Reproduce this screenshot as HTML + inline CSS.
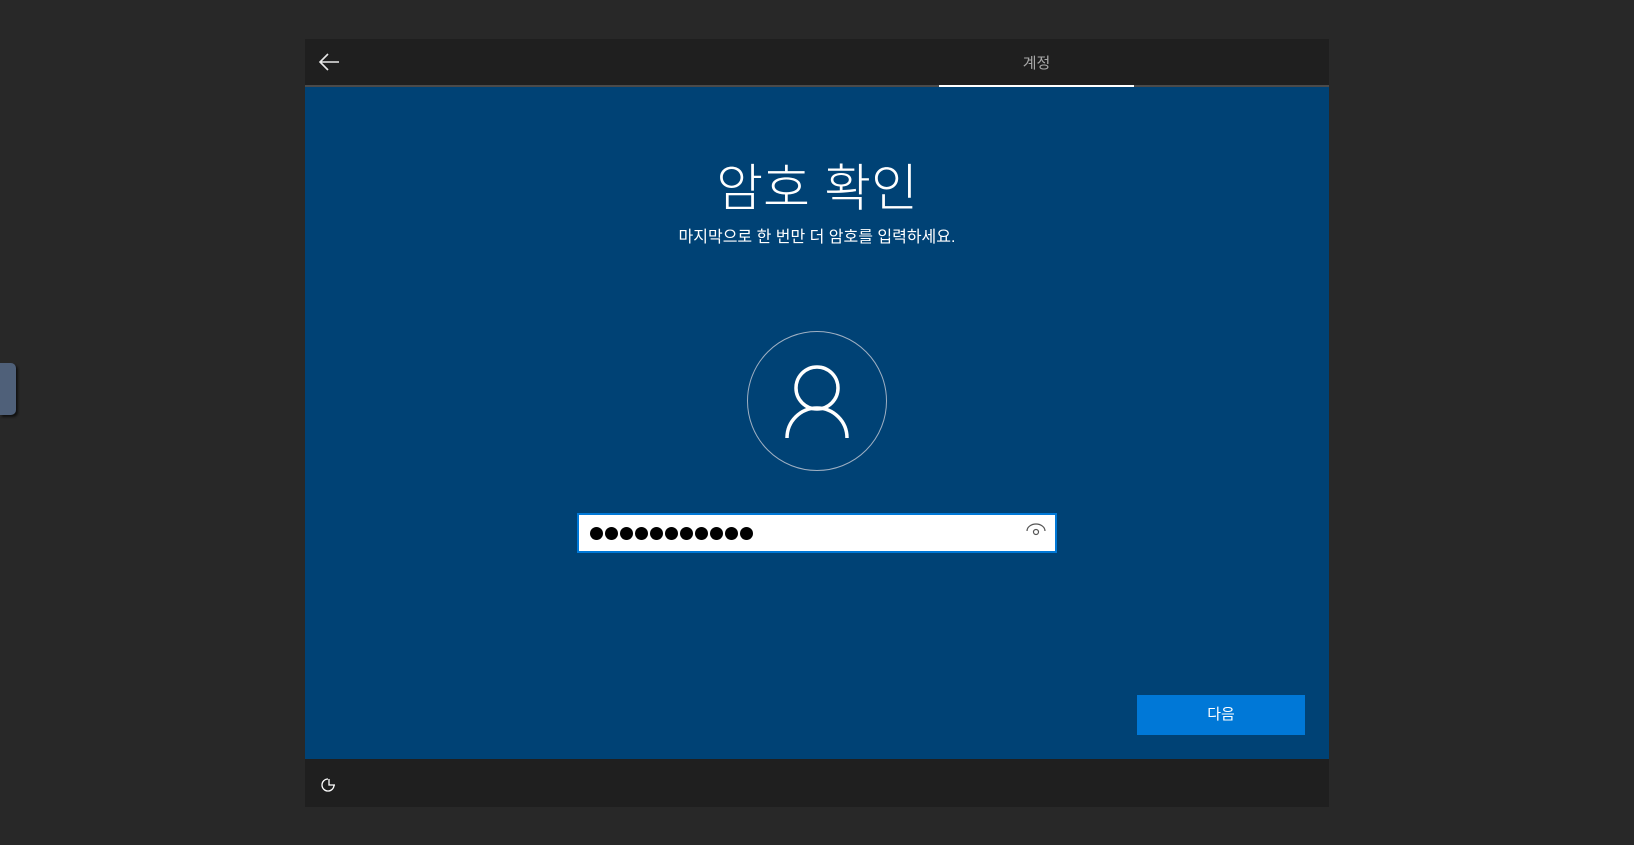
<!DOCTYPE html>
<html><head><meta charset="utf-8"><style>
*{margin:0;padding:0;box-sizing:border-box}
body{width:1634px;height:845px;background:#282828;position:relative;overflow:hidden;font-family:"Liberation Sans","Noto Sans CJK KR","NanumGothic",sans-serif}
.a{position:absolute}
</style></head><body>
<div class="a" style="left:0;top:363px;width:16px;height:52px;background:#4f6079;border-radius:0 5px 5px 0;box-shadow:2px 2px 2px #111"></div>
<div class="a" style="left:305px;top:39px;width:1024px;height:46px;background:#1f1f1f"></div>
<svg class="a" style="left:318px;top:53px" width="22" height="18" viewBox="0 0 22 18"><path d="M21 9H2M10 1L2 9l8 8" stroke="#e8e8e8" stroke-width="1.6" fill="none"/></svg>
<div class="a" style="left:939px;top:52px;width:195px;text-align:center;color:#a8a8a8;font-size:15px">계정</div>
<div class="a" style="left:305px;top:85px;width:1024px;height:2px;background:#4a4a4a"></div>
<div class="a" style="left:939px;top:85px;width:195px;height:2px;background:#fff"></div>
<div class="a" style="left:305px;top:87px;width:1024px;height:672px;background:#004275"></div>
<div class="a" style="left:305px;top:157px;width:1024px;text-align:center;color:#fff;font-size:51px;font-weight:300;line-height:64px">암호 확인</div>
<div class="a" style="left:305px;top:223px;width:1024px;text-align:center;color:#fff;font-size:16px">마지막으로 한 번만 더 암호를 입력하세요.</div>
<svg class="a" style="left:745px;top:329px" width="144" height="144" viewBox="0 0 144 144"><circle cx="72" cy="72" r="69.5" stroke="#9fb0c3" stroke-width="1" fill="none"/><circle cx="72" cy="59" r="21" stroke="#fff" stroke-width="3.5" fill="none"/><path d="M42 109a30 30 0 0 1 60 0" stroke="#fff" stroke-width="3.5" fill="none"/></svg>
<div class="a" style="left:577px;top:513px;width:480px;height:40px;background:#fff;border:2px solid #0078d7"></div>
<div class="a" style="left:590px;top:527px;height:16px;display:flex;gap:2px">
<i style="display:block;width:13px;height:13px;border-radius:50%;background:#000"></i><i style="display:block;width:13px;height:13px;border-radius:50%;background:#000"></i><i style="display:block;width:13px;height:13px;border-radius:50%;background:#000"></i><i style="display:block;width:13px;height:13px;border-radius:50%;background:#000"></i><i style="display:block;width:13px;height:13px;border-radius:50%;background:#000"></i><i style="display:block;width:13px;height:13px;border-radius:50%;background:#000"></i><i style="display:block;width:13px;height:13px;border-radius:50%;background:#000"></i><i style="display:block;width:13px;height:13px;border-radius:50%;background:#000"></i><i style="display:block;width:13px;height:13px;border-radius:50%;background:#000"></i><i style="display:block;width:13px;height:13px;border-radius:50%;background:#000"></i><i style="display:block;width:13px;height:13px;border-radius:50%;background:#000"></i></div>
<svg class="a" style="left:1025px;top:523px" width="22" height="14" viewBox="0 0 22 14"><path d="M2 8a9 7 0 0 1 18 0" stroke="#555" stroke-width="1.2" fill="none"/><circle cx="11" cy="9" r="2.5" stroke="#555" stroke-width="1.2" fill="none"/></svg>
<div class="a" style="left:1137px;top:695px;width:168px;height:40px;background:#0078d7;color:#fff;font-size:15px;text-align:center;line-height:40px">다음</div>
<div class="a" style="left:305px;top:759px;width:1024px;height:48px;background:#1f1f1f"></div>
<svg class="a" style="left:320px;top:776px" width="18" height="18" viewBox="0 0 18 18"><path d="M8 3a6 6 0 1 0 6 6" stroke="#fff" stroke-width="1.3" fill="none"/><path d="M9 3v6h6" stroke="#fff" stroke-width="1.3" fill="none"/></svg>
</body></html>
